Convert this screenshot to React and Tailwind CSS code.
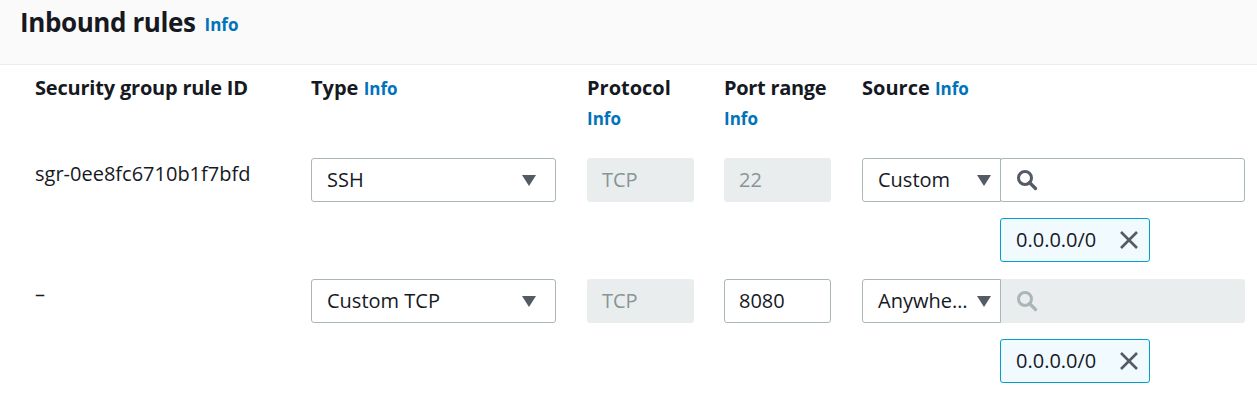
import React from "react";

const font = { fontFamily: '"Open Sans", "Noto Sans", sans-serif' };

function Arrow() {
  return (
    <svg width="14" height="11" viewBox="0 0 14 11" className="shrink-0">
      <path d="M0 0 H14 L7 11 Z" fill="#545b64" />
    </svg>
  );
}

function Search({ color }) {
  return (
    <svg width="22" height="22" viewBox="0 0 22 22" fill="none">
      <circle cx="9" cy="9" r="6.5" stroke={color} strokeWidth="3" />
      <path d="M13.5 13.5 L19.5 19.5" stroke={color} strokeWidth="3.2" strokeLinecap="round" />
    </svg>
  );
}

function Info() {
  return <span className="text-[17px] font-bold text-[#0073bb]">Info</span>;
}

function Select({ label }) {
  return (
    <div className="flex h-[44px] w-[245px] items-center justify-between rounded-[3px] border border-[#aab7b8] bg-white pl-[15px] pr-[19px] text-[20px] text-[#16191f]">
      <span>{label}</span>
      <Arrow />
    </div>
  );
}

function Disabled({ label }) {
  return (
    <div className="flex h-[44px] w-[107px] items-center rounded-[3px] bg-[#eaeded] pl-[15px] text-[20px] text-[#879596]">
      {label}
    </div>
  );
}

function Chip() {
  return (
    <div className="flex h-[44px] w-[150px] items-center justify-between rounded-[3px] border border-[#00a1c9] bg-[#f1faff] pl-[15px] pr-[10px] text-[20px] text-[#16191f]">
      <span>0.0.0.0/0</span>
      <svg width="20" height="20" viewBox="0 0 20 20">
        <path d="M2 2 L18 18 M18 2 L2 18" stroke="#545b64" strokeWidth="2.6" />
      </svg>
    </div>
  );
}

function Source({ label, disabled }) {
  return (
    <div className="-ml-[1px] flex flex-col gap-[16px]">
      <div className="flex h-[44px]">
        <div className="flex w-[139px] min-w-0 items-center justify-between gap-[8px] rounded-l-[3px] border border-[#aab7b8] bg-white pl-[15px] pr-[9px] text-[20px] text-[#16191f]">
          <span className="min-w-0 truncate">{label}</span>
          <Arrow />
        </div>
        {disabled ? (
          <div className="flex w-[244px] items-center rounded-r-[3px] bg-[#eaeded] pl-[15px]">
            <Search color="#aab7b8" />
          </div>
        ) : (
          <div className="-ml-px flex w-[245px] items-center rounded-[3px] border border-[#aab7b8] bg-white pl-[15px]">
            <Search color="#545b64" />
          </div>
        )}
      </div>
      <div className="pl-[138px]">
        <Chip />
      </div>
    </div>
  );
}

export default function App() {
  return (
    <div style={font} className="h-[400px] w-[1257px] bg-white text-[#16191f]">
      <div className="flex h-[65px] items-start gap-[9px] border-b border-[#eaeded] bg-[#fafafa] px-[20px] pt-[3px]">
        <h2 className="text-[26px] font-bold leading-[38px] tracking-[-0.4px]">Inbound rules</h2>
        <span className="mt-[9px] text-[17px] font-bold text-[#0073bb]">Info</span>
      </div>
      <div className="grid grid-cols-[244px_244px_106px_106px_383px] gap-x-[32px] pl-[35px] pt-[9px]">
        <div className="text-[20px] font-bold leading-[27px] tracking-[-0.2px] whitespace-nowrap">Security group rule ID</div>
        <div className="text-[20px] font-bold leading-[27px]">
          Type <Info />
        </div>
        <div className="flex flex-col gap-[4px] text-[20px] font-bold leading-[27px]">
          <span>Protocol</span>
          <Info />
        </div>
        <div className="-ml-[1px] flex flex-col gap-[4px] text-[20px] font-bold leading-[27px] whitespace-nowrap">
          <span className="tracking-[-0.3px]">Port range</span>
          <Info />
        </div>
        <div className="-ml-[1px] text-[20px] font-bold leading-[27px]">
          Source <Info />
        </div>

        <div className="col-span-5 h-[26px]" />

        <div className="pt-[2px] text-[20px] leading-[27px] whitespace-nowrap">sgr-0ee8fc6710b1f7bfd</div>
        <Select label="SSH" />
        <Disabled label="TCP" />
        <div className="-ml-[1px]"><Disabled label="22" /></div>
        <Source label="Custom" />

        <div className="col-span-5 h-[17px]" />

        <div className="pt-[1px] text-[20px] leading-[27px]">–</div>
        <Select label="Custom TCP" />
        <Disabled label="TCP" />
        <div className="-ml-[1px] flex h-[44px] w-[107px] items-center rounded-[3px] border border-[#aab7b8] bg-white pl-[14px] text-[20px]">8080</div>
        <Source label="Anywhere" disabled />
      </div>
    </div>
  );
}
